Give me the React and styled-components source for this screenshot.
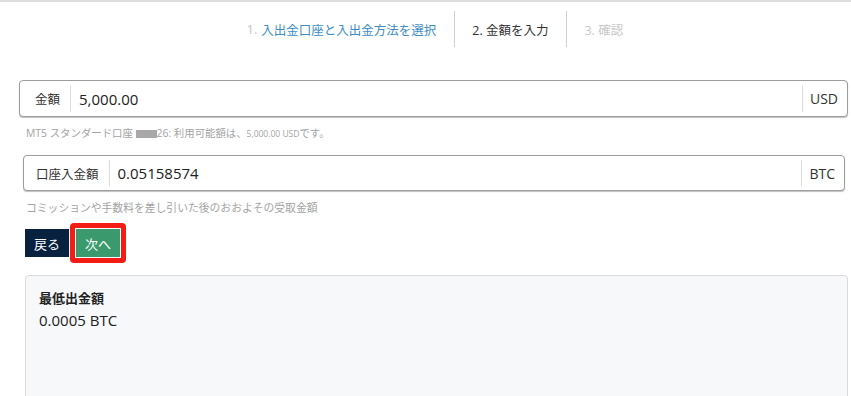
import React from 'react';
import styled, { createGlobalStyle } from 'styled-components';

const GlobalStyle = createGlobalStyle`
  body {
    margin: 0;
    background: #fff;
    font-family: "Open Sans", "Noto Sans CJK JP", sans-serif;
    color: #222;
  }
`;

export default function App() {
  return (
    <>
      <GlobalStyle />
      <Page>
        <Steps>
          <Step>
            <StepNo>1.</StepNo>
            <StepLink>入出金口座と入出金方法を選択</StepLink>
          </Step>
          <Step $divider $state="active">2. 金額を入力</Step>
          <Step $divider $state="todo">3. 確認</Step>
        </Steps>

        <Form>
          <Field $left={19} $right={3} $height={37}>
            <Label $pad={15}>金額</Label>
            <Value>5,000.00</Value>
            <Unit>USD</Unit>
          </Field>
          <Note $size={10.4}>
            MT5 スタンダード口座 <Redacted />26: 利用可能額は、<Small>5,000.00 USD</Small>です。
          </Note>

          <Field $left={23} $right={6} $height={36}>
            <Label $pad={12}>口座入金額</Label>
            <Value>0.05158574</Value>
            <Unit>BTC</Unit>
          </Field>
          <Note $size={10.8} $gap={11}>コミッションや手数料を差し引いた後のおおよその受取金額</Note>

          <Actions>
            <Button $kind="back">戻る</Button>
            <Highlight>
              <Button $kind="next">次へ</Button>
            </Highlight>
          </Actions>

          <InfoBox>
            <InfoTitle>最低出金額</InfoTitle>
            <InfoValue>0.0005 BTC</InfoValue>
          </InfoBox>
        </Form>
      </Page>
    </>
  );
}

const Page = styled.div`
  width: 851px;
  height: 396px;
  overflow: hidden;
  border-top: 2px solid #dedede;
  box-sizing: border-box;
`;

const Steps = styled.nav`
  display: flex;
  justify-content: center;
  padding: 9px 0 0 20px;
`;

const Step = styled.div`
  display: flex;
  align-items: center;
  height: 36px;
  padding: 0 18px 0 17px;
  font-size: 12.5px;
  border-left: ${(p) => (p.$divider ? '1px solid #cfcfcf' : 'none')};
  color: ${(p) => (p.$state === 'active' ? '#333' : p.$state === 'todo' ? '#c8c8c8' : '#3d8cc6')};
`;

const StepNo = styled.span`
  color: #c3c3c3;
  margin-right: 4px;
`;

const StepLink = styled.span`
  color: #3d8cc6;
`;

const Form = styled.div`
  margin-top: 33px;
`;

const Field = styled.div`
  display: flex;
  align-items: center;
  height: ${(p) => p.$height}px;
  margin: 0 ${(p) => p.$right}px 0 ${(p) => p.$left}px;
  border: 1px solid #9c9c9c;
  border-radius: 4px;
  box-shadow: 0 1px 1px rgba(0, 0, 0, 0.25);
  box-sizing: border-box;
  background: #fff;
`;

const Label = styled.div`
  display: flex;
  align-items: center;
  height: 26px;
  padding: 0 10px 0 ${(p) => p.$pad}px;
  border-right: 1px solid #dcdcdc;
  font-size: 12.5px;
  color: #333;
`;

const Value = styled.div`
  flex: 1;
  padding-left: 8px;
  font-size: 15px;
  color: #222;
`;

const Unit = styled.div`
  display: flex;
  align-items: center;
  height: 26px;
  padding: 0 9px 0 7px;
  border-left: 1px solid #dcdcdc;
  font-size: 14px;
  color: #333;
`;

const Note = styled.div`
  margin: ${(p) => p.$gap || 10}px 0 ${(p) => (p.$gap ? 9 : 15)}px 26px;
  font-size: ${(p) => p.$size}px;
  line-height: 12px;
  color: #a3a3a3;
`;

const Small = styled.span`
  font-size: 8.5px;
`;

const Redacted = styled.span`
  display: inline-block;
  width: 21px;
  height: 8px;
  background: #a8a8a8;
  vertical-align: -1px;
`;

const Actions = styled.div`
  display: flex;
  align-items: center;
  margin-left: 25px;
`;

const Button = styled.button`
  height: 28px;
  margin: 0;
  padding: 0 9px;
  border: none;
  border-radius: 0;
  font-family: inherit;
  font-size: 13px;
  color: #fff;
  background: ${(p) => (p.$kind === 'next' ? '#3a9a6e' : '#07213f')};
  cursor: pointer;
`;

const Highlight = styled.div`
  display: flex;
  margin-left: 1px;
  padding: 1px;
  border: 5px solid #f41d16;
  border-radius: 4px;
  background: #fff;
`;

const InfoBox = styled.div`
  margin: 12px 3px 0 25px;
  height: 130px;
  padding: 12px 13px;
  box-sizing: border-box;
  background: #f7f8fa;
  border: 1px solid #dadada;
  border-radius: 4px;
`;

const InfoTitle = styled.div`
  font-size: 13px;
  font-weight: 700;
  color: #222;
  line-height: 20px;
`;

const InfoValue = styled.div`
  margin-top: 2px;
  font-size: 15px;
  color: #222;
  line-height: 20px;
`;
